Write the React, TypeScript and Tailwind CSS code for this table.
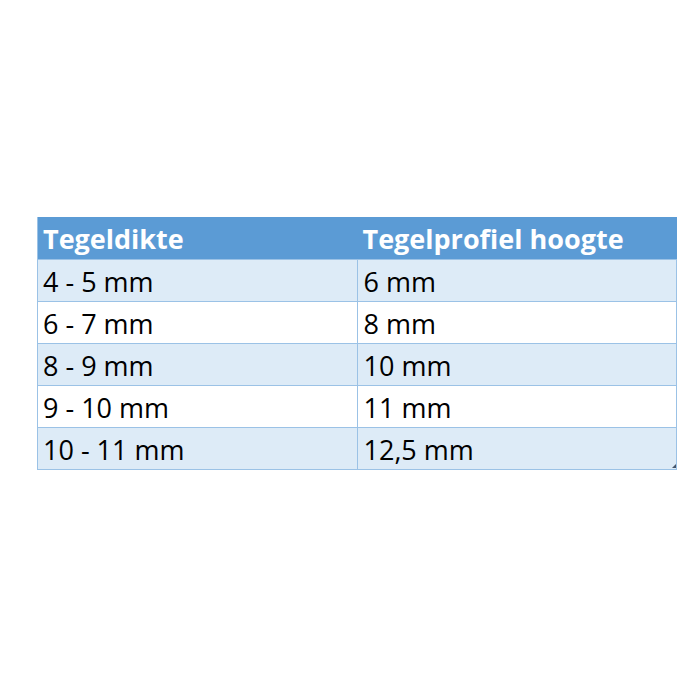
const rows = [
  ['4 - 5 mm', '6 mm'],
  ['6 - 7 mm', '8 mm'],
  ['8 - 9 mm', '10 mm'],
  ['9 - 10 mm', '11 mm'],
  ['10 - 11 mm', '12,5 mm'],
]

export default function App() {
  return (
    <div className="w-[700px] h-[700px] bg-white pt-[217px] pl-[37px] font-['Open_Sans',sans-serif]">
      <div className="relative w-[640px] border-l border-b border-[#9bc2e6]">
        {/* header */}
        <div className="grid grid-cols-2 h-[42px] bg-[#5b9bd5] text-white font-bold text-[27px] leading-[42px]">
          <div className="pl-[5px] pt-[1px]">Tegeldikte</div>
          <div className="pl-[5px] pt-[1px]">Tegelprofiel hoogte</div>
        </div>
        {rows.map((r, i) => (
          <div
            key={i}
            className={
              'grid grid-cols-2 h-[42px] border-t border-[#9bc2e6] text-black text-[27px] leading-[41px] ' +
              (i % 2 === 0 ? 'bg-[#ddebf7]' : 'bg-white')
            }
          >
            <div className="pl-[5px] pt-[1px] border-r border-[#9bc2e6]">{r[0]}</div>
            <div className="pl-[6px] pt-[1px] border-r border-[#9bc2e6]">{r[1]}</div>
          </div>
        ))}
        {/* resize handle */}
        <svg className="absolute right-[1px] bottom-[1px]" width="4" height="4" viewBox="0 0 4 4">
          <polygon points="4,0 4,4 0,4" fill="#44546a" />
        </svg>
      </div>
    </div>
  )
}
